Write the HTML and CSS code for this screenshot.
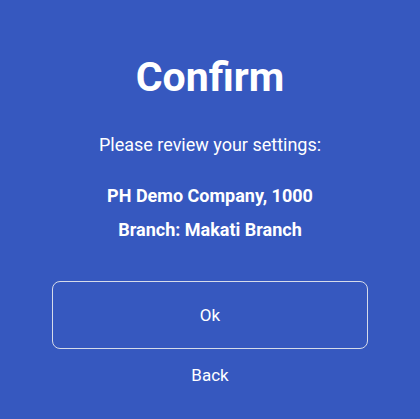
FILE: index.html
```html
<!doctype html>
<html lang="en">
  <head>
    <meta charset="UTF-8" />
    <meta name="viewport" content="width=device-width, initial-scale=1.0" />
    <title>Confirm</title>
    <link rel="stylesheet" href="styles.css">
  </head>
  <body>
    <main class="confirm">
      <h1>Confirm</h1>
      <p class="lead">Please review your settings:</p>

      <div class="summary">
        <p>PH Demo Company, 1000</p>
        <p>Branch: Makati Branch</p>
      </div>

      <div class="actions">
        <button class="ok" type="button">Ok</button>
        <button class="back" type="button">Back</button>
      </div>
    </main>
  </body>
</html>
```

FILE: styles.css
```css
:root {
  box-sizing: border-box;
  background-color: #3658bf;
  color: #fff;
  font: 16px Roboto, "Noto Sans", sans-serif;
}

*,
*:before,
*:after {
  box-sizing: inherit;
}

body {
  margin: 0;
  height: 100vh;
  overflow: hidden;
}

.confirm {
  display: flex;
  flex-direction: column;
  align-items: center;
  padding: 52px 52px 0;
}

h1 {
  margin: 0;
  font-size: 41px;
  font-weight: 700;
  line-height: 50px;
}

.lead {
  margin: 32px 0 0;
  font-size: 18px;
  line-height: 22px;
}

.summary {
  display: flex;
  flex-direction: column;
  align-items: center;
  gap: 10px;
  margin-top: 28px;
  font-size: 18px;
  font-weight: 700;

  & p {
    margin: 0;
    line-height: 24px;
  }
}

.actions {
  display: flex;
  flex-direction: column;
  align-items: center;
  width: 100%;
  margin-top: 39px;
  gap: 14px;
}

button {
  border: none;
  background: none;
  color: inherit;
  font: inherit;
  font-size: 17px;
  cursor: pointer;
}

.ok {
  width: 100%;
  height: 68px;
  border: 1px solid #d6dbea;
  border-radius: 8px;
}

.back {
  padding: 0;
  line-height: 24px;
}
```
